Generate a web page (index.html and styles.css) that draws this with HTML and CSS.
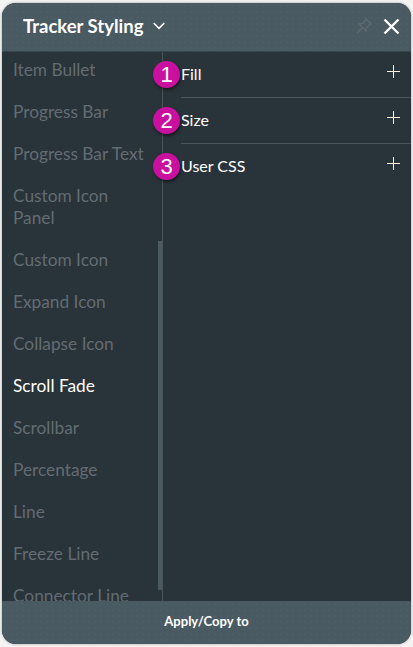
FILE: index.html
```html
<!DOCTYPE html>
<html lang="en">
<head>
    <meta charset="UTF-8">
    <meta name="viewport" content="width=device-width, initial-scale=1.0">
    <title>Tracker Styling</title>
    <link rel="stylesheet" href="styles.css">
</head>
<body>

<div class="panel">
    <div class="panel-header">
        <div class="panel-title">
            <span>Tracker Styling</span>
            <svg class="chevron" width="12" height="8" viewBox="0 0 12 8"><path d="M.7 1 6 6.300 11.300 1" fill="none" stroke="#fff" stroke-width="1.600"/></svg>
        </div>
        <div class="panel-actions">
            <svg class="pin" width="16" height="16" viewBox="0 0 16 16"><path d="M10 1 15 6 13.500 6.500 10.500 9.500l-.5 3.500L3 6l3.500-.5L9.500 2.500z M6.500 9.500 1 15" fill="none" stroke="#5f6a71" stroke-width="1.400"/></svg>
            <svg class="close" width="17" height="17" viewBox="0 0 17 17"><path d="M1.500 1.500l14 14M15.500 1.500l-14 14" fill="none" stroke="#fff" stroke-width="2.400"/></svg>
        </div>
    </div>

    <div class="panel-body">
        <div class="side-list">
            <div class="side-item">Item Bullet</div>
            <div class="side-item">Progress Bar</div>
            <div class="side-item">Progress Bar Text</div>
            <div class="side-item">Custom Icon Panel</div>
            <div class="side-item">Custom Icon</div>
            <div class="side-item">Expand Icon</div>
            <div class="side-item">Collapse Icon</div>
            <div class="side-item active">Scroll Fade</div>
            <div class="side-item">Scrollbar</div>
            <div class="side-item">Percentage</div>
            <div class="side-item">Line</div>
            <div class="side-item">Freeze Line</div>
            <div class="side-item">Connector Line</div>
            <div class="scroll-thumb"></div>
        </div>

        <div class="sections">
            <div class="section">
                <span class="badge">1</span>
                <span>Fill</span>
                <span class="plus"></span>
            </div>
            <div class="section">
                <span class="badge">2</span>
                <span>Size</span>
                <span class="plus"></span>
            </div>
            <div class="section">
                <span class="badge">3</span>
                <span>User CSS</span>
                <span class="plus"></span>
            </div>
        </div>
    </div>

    <div class="panel-footer">Apply/Copy to</div>
</div>

</body>
</html>
```

FILE: styles.css
```css
html, body {
    height: 100%;
}
body {
    margin: 0;
    padding: 3px 2px;
    box-sizing: border-box;
    background-color: #f4f4f4;
    font-family: Lato, "Open Sans", sans-serif;
}
.panel {
    display: flex;
    flex-direction: column;
    height: 641px;
    border-radius: 14px;
    overflow: hidden;
    background-color: #29333a;
    box-shadow: 0 0 3px rgba(0, 0, 0, 0.35);
}
.panel-header {
    display: flex;
    align-items: center;
    justify-content: space-between;
    flex: 0 0 49px;
    padding: 0 11px 2px 21px;
    box-sizing: border-box;
    background-color: #4a5a62;
    background-image: radial-gradient(rgba(255, 255, 255, 0.015) 1px, transparent 1px);
    background-size: 6px 6px;
    border-bottom: 1px solid #3a464d;
}
.panel-title {
    display: flex;
    align-items: center;
    gap: 9px;
    color: #fff;
    font-size: 18.5px;
    font-weight: 700;
}
.panel-actions {
    display: flex;
    align-items: center;
    gap: 11px;
}
.panel-body {
    display: flex;
    flex: 1;
    min-height: 0;
}
.side-list {
    position: relative;
    display: flex;
    flex-direction: column;
    gap: 20px;
    width: 161px;
    flex: none;
    padding: 7px 15px 0 11px;
    box-sizing: border-box;
    border-right: 1px solid #4a545a;
    overflow: hidden;
}
.side-item {
    flex: none;
    color: #636c72;
    font-size: 17.3px;
    line-height: 22px;
}
.side-item.active {
    color: #fff;
}
.scroll-thumb {
    position: absolute;
    top: 189px;
    right: 0;
    width: 4px;
    height: 349px;
    background-color: #4a5a62;
}
.sections {
    flex: 1;
    min-width: 0;
    padding: 0 0 0 18px;
}
.section {
    position: relative;
    display: flex;
    align-items: center;
    justify-content: space-between;
    height: 46px;
    padding: 0 11px 2px 0;
    box-sizing: border-box;
    border-bottom: 1px solid #4a545a;
    color: #fff;
    font-size: 16px;
}
.section:last-child {
    border-bottom-color: transparent;
}
.badge {
    position: absolute;
    left: -28px;
    top: 9px;
    width: 27px;
    height: 27px;
    border-radius: 50%;
    background-color: #c9109f;
    box-shadow: 1px 2px 3px rgba(0, 0, 0, 0.5);
    color: #fff;
    font-family: "Liberation Sans", Arial, sans-serif;
    font-size: 22px;
    line-height: 27px;
    text-align: center;
}
.plus {
    position: relative;
    width: 13px;
    height: 13px;
    margin-bottom: 4px;
}
.plus::before,
.plus::after {
    content: "";
    position: absolute;
    background-color: #fff3dc;
}
.plus::before {
    left: 0;
    right: 0;
    top: 6px;
    height: 1px;
}
.plus::after {
    top: 0;
    bottom: 0;
    left: 6px;
    width: 1px;
}
.panel-footer {
    flex: 0 0 43px;
    display: flex;
    align-items: center;
    justify-content: center;
    padding-bottom: 4px;
    box-sizing: border-box;
    background-color: #4a5a62;
    background-image: radial-gradient(rgba(255, 255, 255, 0.015) 1px, transparent 1px);
    background-size: 6px 6px;
    color: #fff;
    font-size: 13px;
    font-weight: 700;
}
```
